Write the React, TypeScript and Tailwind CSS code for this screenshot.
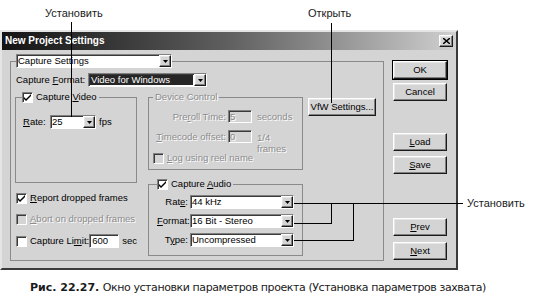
import React from "react";

const FACE = "bg-[#d4d4d4]";
const raised =
  "border border-t-white border-l-white border-r-[#1a1a1a] border-b-[#1a1a1a] shadow-[inset_-1px_-1px_0_#808080,inset_1px_1px_0_#e6e6e6]";
const sunken =
  "border border-t-[#808080] border-l-[#808080] border-r-white border-b-white shadow-[inset_1px_1px_0_#3a3a3a]";
const dim = "text-[#8c8c8c] [text-shadow:1px_1px_0_#fff]";

const U = ({ children }: { children: React.ReactNode }) => (
  <span className="underline underline-offset-[1px]">{children}</span>
);

const Arrow = () => (
  <span className={`flex h-full w-[12px] shrink-0 items-center justify-center ${FACE} ${raised}`}>
    <svg width="5" height="3" viewBox="0 0 5 3">
      <path d="M0 0h5L2.5 3z" fill="#000" />
    </svg>
  </span>
);

const Drop = ({ value, w, sel }: { value: string; w: string; sel?: boolean }) => (
  <div className={`flex h-[14px] shrink-0 bg-white ${sunken} ${w}`}>
    <span
      className={`flex flex-1 items-center whitespace-nowrap pl-[1px] ${
        sel ? "m-[1px] bg-[#262626] text-white" : ""
      }`}
    >
      {value}
    </span>
    <Arrow />
  </div>
);

const Box = ({ on, off }: { on?: boolean; off?: boolean }) => (
  <span
    className={`flex h-[11px] w-[11px] shrink-0 items-center justify-center ${
      off ? FACE : "bg-white"
    } ${sunken}`}
  >
    {on && (
      <svg width="7" height="7" viewBox="0 0 7 7">
        <path d="M0 3L2 5L7 0V2L2 7L0 5Z" fill="#000" />
      </svg>
    )}
  </span>
);

const Btn = ({
  children,
  def,
  className = "",
}: {
  children: React.ReactNode;
  def?: boolean;
  className?: string;
}) => (
  <div
    className={`flex h-[18px] items-center justify-center ${FACE} ${raised} ${
      def ? "outline outline-black" : ""
    } ${className}`}
  >
    {children}
  </div>
);

export default function App() {
  return (
    <div className="relative h-[302px] w-[537px] overflow-hidden bg-white">
      <div
        className={`mt-[30px] flex h-[240px] w-[458px] flex-col border-2 border-t-[#e4e4e4] border-l-[#e4e4e4] border-r-[#3a3a3a] border-b-[#3a3a3a] ${FACE} font-['Liberation_Sans',Arial,sans-serif] text-[9.5px] leading-none text-black`}
      >
        {/* title bar */}
        <div className="flex h-[18px] shrink-0 items-center justify-between bg-gradient-to-r from-[#141414] via-[#606060] to-[#d0d0d0] px-[3px]">
          <span className="text-[10px] font-bold text-white">New Project Settings</span>
          <span className={`flex h-[12px] w-[14px] items-center justify-center ${FACE} ${raised}`}>
            <svg width="7" height="6" viewBox="0 0 7 6">
              <path d="M0 0L7 6M7 0L0 6" stroke="#000" strokeWidth="1.4" />
            </svg>
          </span>
        </div>

        <div className="flex pl-[8px] pt-[4px]">
          <fieldset className="h-[207px] w-[374px] shrink-0 border border-[#8a8a8a] px-[4px]">
            <legend className="ml-[1px]">
              <Drop w="w-[156px]" value="Capture Settings" />
            </legend>

            <div className="mt-[5px] flex h-[14px] items-center pl-[1px]">
              <span className="w-[72px]">
                Capture <U>F</U>ormat:
              </span>
              <Drop w="w-[119px]" value="Video for Windows" sel />
            </div>

            <div className="mt-[4px] flex">
              {/* left column */}
              <div className="flex w-[122px] shrink-0 flex-col">
                <fieldset className="h-[92px] border border-[#8a8a8a] px-[6px]">
                  <legend className="pr-[2px]">
                    <span className="flex h-[12px] items-center gap-[3px]">
                      <Box on />
                      <span>
                        Capture <U>V</U>ideo
                      </span>
                    </span>
                  </legend>
                  <div className="mt-[12px] flex h-[14px] items-center pl-[1px]">
                    <span className="w-[27px]">
                      <U>R</U>ate:
                    </span>
                    <Drop w="w-[46px]" value="25" />
                    <span className="ml-[3px]">fps</span>
                  </div>
                </fieldset>

                <div className="mt-[9px] flex flex-col gap-[9px] pl-[1px]">
                  <div className="flex h-[12px] items-center gap-[3px]">
                    <Box on />
                    <span className="whitespace-nowrap">
                      <U>R</U>eport dropped frames
                    </span>
                  </div>
                  <div className="flex h-[12px] items-center gap-[3px]">
                    <Box off />
                    <span className={`whitespace-nowrap ${dim}`}>
                      <U>A</U>bort on dropped frames
                    </span>
                  </div>
                  <div className="flex h-[14px] items-center">
                    <Box />
                    <span className="ml-[3px] w-[62px] whitespace-nowrap">
                      Capture Li<U>m</U>it:
                    </span>
                    <span className={`flex h-[14px] w-[33px] items-center bg-white pl-[2px] ${sunken}`}>
                      600
                    </span>
                    <span className="ml-[3px]">sec</span>
                  </div>
                </div>
              </div>

              {/* middle column */}
              <div className="ml-[11px] flex w-[155px] shrink-0 flex-col">
                <fieldset className="h-[79px] border border-[#8a8a8a] px-[4px]">
                  <legend className={`px-[2px] leading-[12px] ${dim}`}>Device Control</legend>
                  <div className="mt-[7px] flex h-[13px] items-center">
                    <span className={`w-[73px] text-right ${dim}`}>
                      Pre<U>r</U>oll Time:
                    </span>
                    <span className={`ml-[2px] flex h-[13px] w-[24px] items-center pl-[1px] ${FACE} ${sunken} ${dim}`}>
                      5
                    </span>
                    <span className={`ml-[5px] ${dim}`}>seconds</span>
                  </div>
                  <div className="mt-[7px] flex h-[22px] items-start">
                    <span className={`mt-[2px] w-[73px] text-right ${dim}`}>
                      <U>T</U>imecode offset:
                    </span>
                    <span className={`ml-[2px] flex h-[13px] w-[24px] items-center pl-[1px] ${FACE} ${sunken} ${dim}`}>
                      0
                    </span>
                    <span className={`ml-[5px] mt-[2px] leading-[11px] ${dim}`}>
                      1/4
                      <br />
                      frames
                    </span>
                  </div>
                  <div className="flex h-[12px] items-center gap-[3px]">
                    <Box off />
                    <span className={`whitespace-nowrap ${dim}`}>
                      <U>L</U>og using reel name
                    </span>
                  </div>
                </fieldset>

                <fieldset className="mt-[8px] h-[78px] border border-[#8a8a8a] px-[8px]">
                  <legend className="pr-[2px]">
                    <span className="flex h-[12px] items-center gap-[3px]">
                      <Box on />
                      <span>
                        Capture <U>A</U>udio
                      </span>
                    </span>
                  </legend>
                  <div className="mt-[5px] flex flex-col gap-[5px]">
                    <div className="flex h-[14px] items-center">
                      <span className="w-[31px] text-right">
                        Rat<U>e</U>:
                      </span>
                      <span className="ml-[2px]">
                        <Drop w="w-[104px]" value="44 kHz" />
                      </span>
                    </div>
                    <div className="flex h-[14px] items-center">
                      <span className="w-[31px] text-right">
                        <U>F</U>ormat:
                      </span>
                      <span className="ml-[2px]">
                        <Drop w="w-[104px]" value="16 Bit - Stereo" />
                      </span>
                    </div>
                    <div className="flex h-[14px] items-center">
                      <span className="w-[31px] text-right">
                        T<U>y</U>pe:
                      </span>
                      <span className="ml-[2px]">
                        <Drop w="w-[104px]" value="Uncompressed" />
                      </span>
                    </div>
                  </div>
                </fieldset>
              </div>

              {/* vfw */}
              <div className="ml-[5px] mt-[7px]">
                <Btn className="h-[17px] w-[68px]">VfW Settings...</Btn>
              </div>
            </div>
          </fieldset>

          {/* right buttons */}
          <div className="ml-[9px] mt-[7px] flex w-[54px] shrink-0 flex-col">
            <Btn def>OK</Btn>
            <Btn className="mt-[4px]">Cancel</Btn>
            <Btn className="mt-[32px]">
              <U>L</U>oad
            </Btn>
            <Btn className="mt-[5px]">
              <U>S</U>ave
            </Btn>
            <Btn className="mt-[44px]">
              <U>P</U>rev
            </Btn>
            <Btn className="mt-[6px]">
              <U>N</U>ext
            </Btn>
          </div>
        </div>
      </div>

      <div className="mt-[12px] whitespace-nowrap pl-[30px] font-['DejaVu_Sans',Verdana,sans-serif] text-[11px] leading-[12px] text-[#1a1a1a]">
        <span className="font-bold">Рис. 22.27.</span>{" "}
        <span className="tracking-[-0.42px]">
          Окно установки параметров проекта (Установка параметров захвата)
        </span>
      </div>

      {/* callouts */}
      <svg
        className="pointer-events-none absolute left-0 top-0"
        width="537"
        height="302"
        shapeRendering="crispEdges"
      >
        <g stroke="#000" strokeWidth="1" fill="none">
          <path d="M71.5 22V117" />
          <path d="M331.5 23V103" />
          <path d="M294 203.5H463" />
          <path d="M294 223.5H331.5V203" />
          <path d="M294 240.5H353.5V203" />
        </g>
      </svg>
      <span className="absolute left-[45px] top-[7px] font-['Liberation_Sans',Arial,sans-serif] text-[11px] leading-[13px] text-[#1a1a1a]">
        Установить
      </span>
      <span className="absolute left-[308px] top-[7px] font-['Liberation_Sans',Arial,sans-serif] text-[11px] leading-[13px] text-[#1a1a1a]">
        Открыть
      </span>
      <span className="absolute left-[467px] top-[197px] font-['Liberation_Sans',Arial,sans-serif] text-[11px] leading-[13px] text-[#1a1a1a]">
        Установить
      </span>
    </div>
  );
}
